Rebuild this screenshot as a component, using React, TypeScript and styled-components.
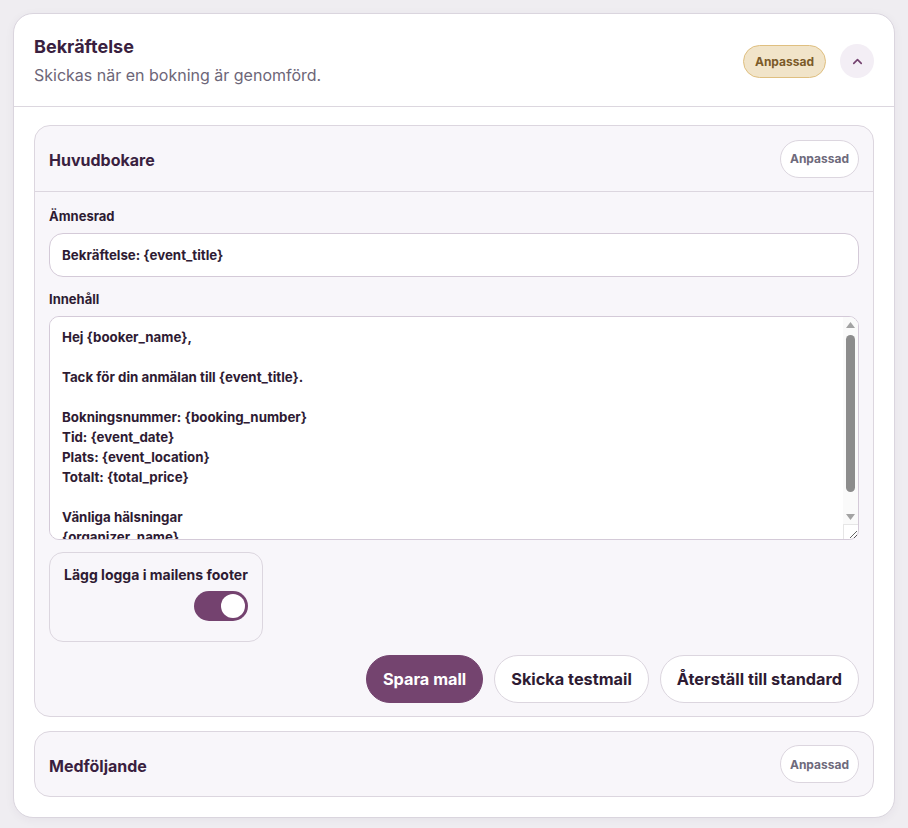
import React from 'react'
import styled, { createGlobalStyle } from 'styled-components'
import { ChevronUp } from 'lucide-react'

const GlobalStyle = createGlobalStyle`
  html, body {
    margin: 0;
    padding: 0;
    background: #efedf1;
    font-family: Inter, "Noto Sans", "Liberation Sans", sans-serif;
    color: #2e1b33;
  }
  * {
    box-sizing: border-box;
  }
`

const Page = styled.div`
  padding: 13px 13px 11px 13px;
`

const Card = styled.section`
  background: #fff;
  border: 1px solid #dad5de;
  border-radius: 20px;
  box-shadow: 0 2px 10px rgba(60, 30, 70, 0.05);
`

const CardHeader = styled.header`
  display: flex;
  align-items: center;
  justify-content: space-between;
  padding: 19px 20px 19px 20px;
  border-bottom: 1px solid #dcd7df;
  min-height: 93px;
`

const HeaderText = styled.div`
  display: flex;
  flex-direction: column;
  gap: 8px;
`

const Title = styled.h2`
  margin: 0;
  font-size: 18px;
  font-weight: 700;
  color: #3a1f40;
`

const Subtitle = styled.p`
  margin: 0;
  font-size: 16px;
  color: #6d6678;
`

const HeaderActions = styled.div`
  display: flex;
  align-items: center;
  gap: 14px;
  margin-top: 2px;
`

const Badge = styled.span`
  display: inline-flex;
  align-items: center;
  height: 33px;
  padding: 0 11px;
  border-radius: 999px;
  background: #f1e4c9;
  border: 1px solid #dfbf80;
  color: #7b5a28;
  font-size: 12px;
  font-weight: 700;
`

const RoundButton = styled.button`
  width: 34px;
  height: 34px;
  border-radius: 50%;
  border: none;
  background: #f3eef5;
  color: #74426f;
  display: flex;
  align-items: center;
  justify-content: center;
  padding: 0;
`

const CardBody = styled.div`
  display: flex;
  flex-direction: column;
  gap: 14px;
  padding: 18px 20px 20px 20px;
`

const SubCard = styled.div`
  background: #f8f6fa;
  border: 1px solid #dcd6df;
  border-radius: 16px;
`

const SubHeader = styled.div<{ $divider?: boolean }>`
  display: flex;
  align-items: center;
  justify-content: space-between;
  height: ${p => (p.$divider ? '66px' : '64px')};
  padding: 0 14px;
  border-bottom: ${p => (p.$divider ? '1px solid #dcd6df' : 'none')};
`

const SubTitle = styled.h3`
  margin: 3px 0 0 0;
  font-size: 16px;
  font-weight: 700;
  color: #3a1f40;
`

const GhostPill = styled.button`
  height: 38px;
  padding: 0 9px;
  border-radius: 999px;
  background: #fff;
  border: 1px solid #dcd6df;
  color: #6e6a7b;
  font-family: inherit;
  font-size: 12px;
  font-weight: 700;
`

const SubBody = styled.div`
  display: flex;
  flex-direction: column;
  padding: 16px 14px 13px 14px;
`

const Label = styled.label`
  display: block;
  font-size: 13px;
  font-weight: 700;
  color: #2e1b33;
  margin-bottom: 9px;
`

const TextInput = styled.input`
  width: 100%;
  height: 44px;
  padding: 0 12px;
  border: 1px solid #d4cad8;
  border-radius: 14px;
  background: #fff;
  font-family: inherit;
  font-size: 13.3px;
  font-weight: 700;
  color: #2e1b33;
  margin-bottom: 14px;
  outline: none;
`

const AreaWrap = styled.div`
  position: relative;
`

const TextArea = styled.textarea`
  width: 100%;
  height: 224px;
  padding: 10px 28px 10px 12px;
  border: 1px solid #d4cad8;
  border-radius: 10px;
  background: #fff;
  font-family: inherit;
  font-size: 13.3px;
  font-weight: 700;
  line-height: 20px;
  color: #2e1b33;
  resize: vertical;
  outline: none;
  display: block;
`

/* headless chrome hides native scrollbars, so the classic bar is drawn over the textarea */
const ScrollBar = styled.div`
  position: absolute;
  top: 1px;
  right: 1px;
  bottom: 16px;
  width: 15px;
  background: #fafafa;
  border-top-right-radius: 9px;
  display: flex;
  flex-direction: column;
  pointer-events: none;
`

const ScrollArrow = styled.div`
  height: 15px;
  display: flex;
  align-items: center;
  justify-content: center;
  flex-shrink: 0;
`

const ScrollTrack = styled.div`
  flex: 1;
  padding: 3px 3px 0 3px;
`

const ScrollThumb = styled.div`
  height: 157px;
  border-radius: 5px;
  background: #8c8c8c;
`

const ScrollCorner = styled.div`
  position: absolute;
  right: 1px;
  bottom: 1px;
  width: 15px;
  height: 15px;
  border-top: 1px solid #e6e6e6;
  border-left: 1px solid #e6e6e6;
  pointer-events: none;
`

const ToggleCard = styled.div`
  margin-top: 12px;
  width: 214px;
  height: 90px;
  border: 1px solid #dcd6df;
  border-radius: 14px;
  padding: 13px 14px 0 14px;
  display: flex;
  flex-direction: column;
  align-items: flex-end;
  gap: 8px;
`

const ToggleLabel = styled.span`
  align-self: stretch;
  text-align: center;
  font-size: 14px;
  font-weight: 700;
  color: #2e1b33;
  white-space: nowrap;
`

const Switch = styled.span<{ $on: boolean }>`
  position: relative;
  width: 54px;
  height: 30px;
  border-radius: 15px;
  background: ${p => (p.$on ? '#74426f' : '#d6d0da')};
  &::after {
    content: '';
    position: absolute;
    top: 3px;
    left: ${p => (p.$on ? '27px' : '3px')};
    width: 24px;
    height: 24px;
    border-radius: 50%;
    background: #fff;
  }
`

const Actions = styled.div`
  display: flex;
  justify-content: flex-end;
  gap: 11px;
  margin-top: 13px;
`

const ActionButton = styled.button<{ $primary?: boolean }>`
  height: 48px;
  padding: 0 16px;
  border-radius: 999px;
  font-family: inherit;
  font-size: 16.3px;
  font-weight: 700;
  border: 1px solid ${p => (p.$primary ? '#74446f' : '#dcd6df')};
  background: ${p => (p.$primary ? '#74446f' : '#fff')};
  color: ${p => (p.$primary ? '#fff' : '#2e1b33')};
`

const body = `Hej {booker_name},

Tack för din anmälan till {event_title}.

Bokningsnummer: {booking_number}
Tid: {event_date}
Plats: {event_location}
Totalt: {total_price}

Vänliga hälsningar
{organizer_name}
`

const Arrow = ({ up }: { up?: boolean }) => (
  <svg width="9" height="6" viewBox="0 0 9 6">
    <path d={up ? 'M0 6 L4.5 0 L9 6 Z' : 'M0 0 L4.5 6 L9 0 Z'} fill="#a3a3a3" />
  </svg>
)

export default function App() {
  return (
    <>
      <GlobalStyle />
      <Page>
        <Card>
          <CardHeader>
            <HeaderText>
              <Title>Bekräftelse</Title>
              <Subtitle>Skickas när en bokning är genomförd.</Subtitle>
            </HeaderText>
            <HeaderActions>
              <Badge>Anpassad</Badge>
              <RoundButton aria-label="Fäll ihop">
                <ChevronUp size={15} strokeWidth={2.6} />
              </RoundButton>
            </HeaderActions>
          </CardHeader>
          <CardBody>
            <SubCard>
              <SubHeader $divider>
                <SubTitle>Huvudbokare</SubTitle>
                <GhostPill>Anpassad</GhostPill>
              </SubHeader>
              <SubBody>
                <Label>Ämnesrad</Label>
                <TextInput defaultValue="Bekräftelse: {event_title}" />
                <Label>Innehåll</Label>
                <AreaWrap>
                  <TextArea defaultValue={body} />
                  <ScrollBar>
                    <ScrollArrow>
                      <Arrow up />
                    </ScrollArrow>
                    <ScrollTrack>
                      <ScrollThumb />
                    </ScrollTrack>
                    <ScrollArrow>
                      <Arrow />
                    </ScrollArrow>
                  </ScrollBar>
                  <ScrollCorner />
                </AreaWrap>
                <ToggleCard>
                  <ToggleLabel>Lägg logga i mailens footer</ToggleLabel>
                  <Switch $on={true} />
                </ToggleCard>
                <Actions>
                  <ActionButton $primary>Spara mall</ActionButton>
                  <ActionButton>Skicka testmail</ActionButton>
                  <ActionButton>Återställ till standard</ActionButton>
                </Actions>
              </SubBody>
            </SubCard>
            <SubCard>
              <SubHeader>
                <SubTitle>Medföljande</SubTitle>
                <GhostPill>Anpassad</GhostPill>
              </SubHeader>
            </SubCard>
          </CardBody>
        </Card>
      </Page>
    </>
  )
}
